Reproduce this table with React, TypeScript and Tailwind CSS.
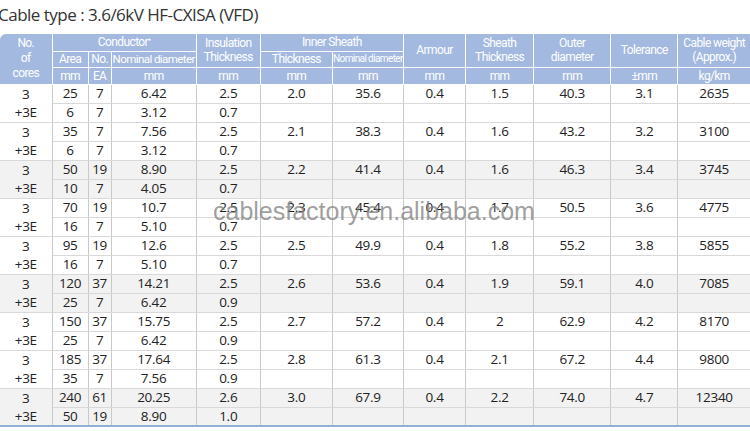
import React from 'react';

type Group = {
  main: string[];
  earth: string[];
  rest: string[];
};

const groups: Group[] = [
  { main: ['25', '7', '6.42', '2.5'], earth: ['6', '7', '3.12', '0.7'], rest: ['2.0', '35.6', '0.4', '1.5', '40.3', '3.1', '2635'] },
  { main: ['35', '7', '7.56', '2.5'], earth: ['6', '7', '3.12', '0.7'], rest: ['2.1', '38.3', '0.4', '1.6', '43.2', '3.2', '3100'] },
  { main: ['50', '19', '8.90', '2.5'], earth: ['10', '7', '4.05', '0.7'], rest: ['2.2', '41.4', '0.4', '1.6', '46.3', '3.4', '3745'] },
  { main: ['70', '19', '10.7', '2.5'], earth: ['16', '7', '5.10', '0.7'], rest: ['2.3', '45.4', '0.4', '1.7', '50.5', '3.6', '4775'] },
  { main: ['95', '19', '12.6', '2.5'], earth: ['16', '7', '5.10', '0.7'], rest: ['2.5', '49.9', '0.4', '1.8', '55.2', '3.8', '5855'] },
  { main: ['120', '37', '14.21', '2.5'], earth: ['25', '7', '6.42', '0.9'], rest: ['2.6', '53.6', '0.4', '1.9', '59.1', '4.0', '7085'] },
  { main: ['150', '37', '15.75', '2.5'], earth: ['25', '7', '6.42', '0.9'], rest: ['2.7', '57.2', '0.4', '2', '62.9', '4.2', '8170'] },
  { main: ['185', '37', '17.64', '2.5'], earth: ['35', '7', '7.56', '0.9'], rest: ['2.8', '61.3', '0.4', '2.1', '67.2', '4.4', '9800'] },
  { main: ['240', '61', '20.25', '2.6'], earth: ['50', '19', '8.90', '1.0'], rest: ['3.0', '67.9', '0.4', '2.2', '74.0', '4.7', '12340'] },
];

const widths = [52, 36, 23, 85, 64, 72, 71, 62, 68, 77, 67, 72];
const units = ['mm', 'EA', 'mm', 'mm', 'mm', 'mm', 'mm', 'mm', 'mm', '±mm', 'kg/km'];

const th = 'border border-white text-white font-normal p-0 text-center align-middle whitespace-nowrap tracking-[-0.05em]';
const td = 'p-0 text-center align-middle border-x border-x-[#c9c9c9] border-y border-y-[#d9d9d9]';

export default function App() {
  return (
    <div className="w-[750px] h-[431px] bg-white overflow-hidden text-[#222]" style={{ fontFamily: '"Open Sans", "Noto Sans", sans-serif' }}>
      <div className="h-[34px] pt-[3px] -ml-[2px] text-[17px] text-[#333] tracking-[-0.03em] leading-[24px]">
        Cable type : 3.6/6kV HF-CXISA (VFD)
      </div>
      <div className="relative">
        <table className="w-[750px] table-fixed border-collapse border-b-2 border-b-[#8fb1d8]">
          <colgroup>
            {widths.map((w, i) => (
              <col key={i} style={{ width: w }} />
            ))}
          </colgroup>
          <thead className="bg-[#a3b9df] text-[12px] leading-[14px]" style={{ fontFamily: 'Roboto, "Liberation Sans", sans-serif' }}>
            <tr className="h-[17px]">
              <th rowSpan={3} className={`${th} border-l-0 border-t-0 rounded-tl-md leading-[15px]`}>No.<br />of<br />cores</th>
              <th colSpan={3} className={`${th} border-t-0`}>Conductor<sup className="text-[7px]">*</sup></th>
              <th rowSpan={2} className={`${th} border-t-0`}>Insulation<br />Thickness</th>
              <th colSpan={2} className={`${th} border-t-0`}>Inner Sheath</th>
              <th rowSpan={2} className={`${th} border-t-0`}>Armour</th>
              <th rowSpan={2} className={`${th} border-t-0`}>Sheath<br />Thickness</th>
              <th rowSpan={2} className={`${th} border-t-0`}>Outer<br />diameter</th>
              <th rowSpan={2} className={`${th} border-t-0`}>Tolerance</th>
              <th rowSpan={2} className={`${th} border-t-0 border-r-0`}>Cable weight<br />(Approx.)</th>
            </tr>
            <tr className="h-[16px]">
              <th className={th}>Area</th>
              <th className={th}>No.</th>
              <th className={`${th} text-[11.5px]`}>Nominal diameter</th>
              <th className={th}>Thickness</th>
              <th className={`${th} text-[10px] tracking-[-0.06em]`}>Nominal diameter</th>
            </tr>
            <tr className="h-[17px]">
              {units.map((u, i) => (
                <th key={i} className={`${th} text-[#dbe4f3] ${i === units.length - 1 ? 'border-r-0' : ''}`}>{u}</th>
              ))}
            </tr>
          </thead>
          <tbody className="text-[13.5px] leading-[17px] tracking-[-0.02em]">
            {groups.map((g, gi) => {
              const bg = gi % 3 === 2 ? 'bg-[#f2f2f2]' : 'bg-white';
              return (
                <React.Fragment key={gi}>
                  <tr className={`h-[19px] ${bg}`}>
                    <td rowSpan={2} className={`${td} border-l-0 leading-[18px]`}>3<br />+3E</td>
                    {g.main.map((v, i) => (
                      <td key={i} className={td}>{v}</td>
                    ))}
                    {g.rest.map((v, i) => (
                      <td key={i} className={`${td} ${i === g.rest.length - 1 ? 'border-r-0' : ''}`}>{v}</td>
                    ))}
                  </tr>
                  <tr className={`h-[19px] ${bg}`}>
                    {g.earth.map((v, i) => (
                      <td key={i} className={td}>{v}</td>
                    ))}
                    {g.rest.map((_, i) => (
                      <td key={i} className={`${td} ${i === g.rest.length - 1 ? 'border-r-0' : ''}`}></td>
                    ))}
                  </tr>
                </React.Fragment>
              );
            })}
          </tbody>
        </table>
        <div
          className="absolute left-[213px] top-[162px] text-[25px] leading-[30px] text-[#808080]/75 pointer-events-none whitespace-nowrap"
          style={{ fontFamily: '"Liberation Sans", Arial, sans-serif' }}
        >
          cablesfactory.en.alibaba.com
        </div>
      </div>
    </div>
  );
}
